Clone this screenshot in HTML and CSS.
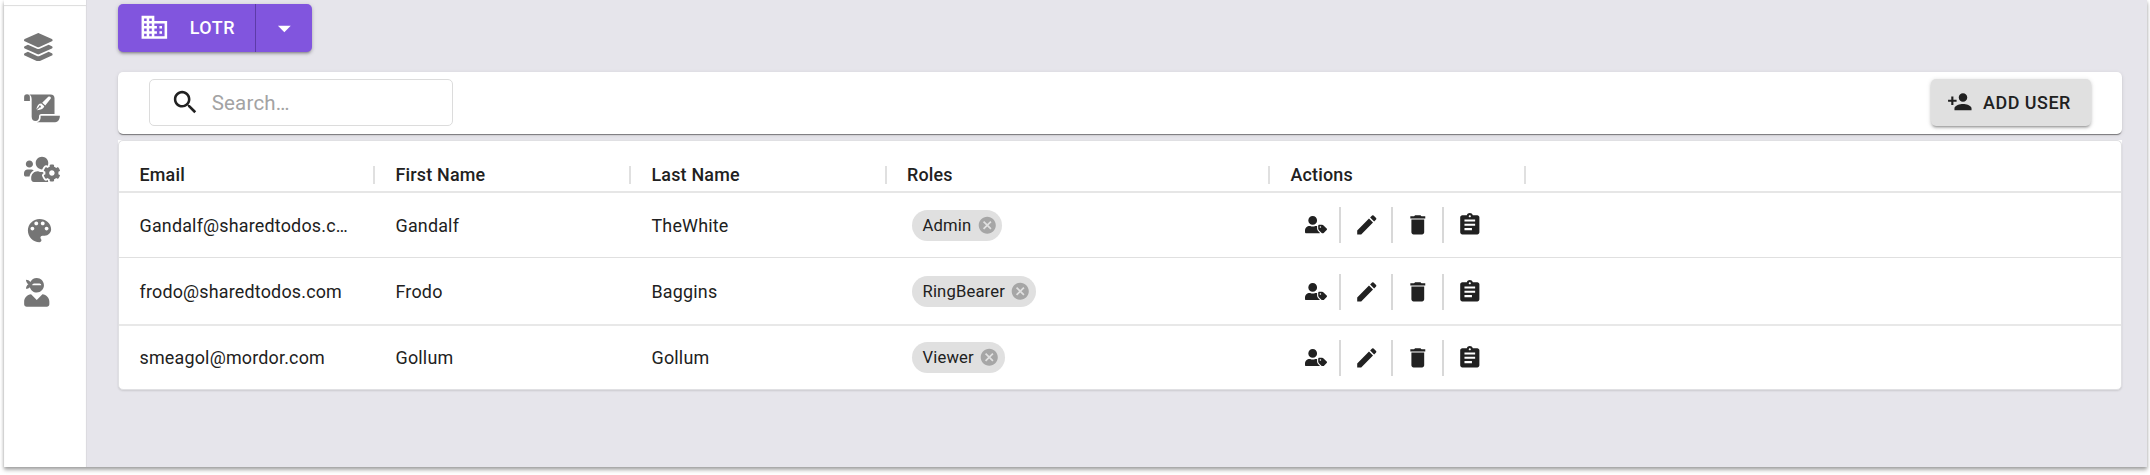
FILE: index.html
```html
<!DOCTYPE html>
<html lang="en">
<head>
<meta charset="utf-8">
<title>Users</title>
<link rel="stylesheet" href="styles.css">
</head>
<body>
<svg class="defs" width="0" height="0">
  <symbol id="i-tag" viewBox="0 0 640 512"><path d="M630.6 364.9l-90.3-90.2c-12-12-28.3-18.7-45.3-18.7h-79.3c-17.7 0-32 14.3-32 32v79.2c0 17 6.7 33.2 18.7 45.2l90.3 90.2c12.5 12.5 32.8 12.5 45.3 0l92.5-92.5c12.6-12.5 12.6-32.7.1-45.2zm-182.8-21c-13.3 0-24-10.7-24-24s10.7-24 24-24 24 10.7 24 24c0 13.2-10.7 24-24 24zm-223.8-88c70.7 0 128-57.3 128-128C352 57.3 294.7 0 224 0S96 57.3 96 128c0 70.6 57.3 127.9 128 127.9zm127.8 111.2V294c-12.2-3.6-24.9-6.2-38.2-6.2h-16.7c-22.2 10.2-46.9 16-72.9 16s-50.6-5.8-72.9-16h-16.7C60.2 287.9 0 348.1 0 422.3v41.6c0 26.5 21.5 48 48 48h352c15.5 0 29.1-7.5 37.9-18.9l-58-58c-18.1-18.1-28.1-42.2-28.1-67.9z"/></symbol>
  <symbol id="i-edit" viewBox="0 0 24 24"><path d="M3 17.25V21h3.75L17.81 9.94l-3.75-3.75L3 17.25zM20.71 7.04c.39-.39.39-1.02 0-1.41l-2.34-2.34a.9959.9959 0 0 0-1.41 0l-1.83 1.83 3.75 3.75 1.83-1.83z"/></symbol>
  <symbol id="i-delete" viewBox="0 0 24 24"><path d="M6 19c0 1.1.9 2 2 2h8c1.1 0 2-.9 2-2V7H6v12zM19 4h-3.5l-1-1h-5l-1 1H5v2h14V4z"/></symbol>
  <symbol id="i-list" viewBox="0 0 24 24"><path d="M19 3h-4.18C14.4 1.84 13.3 1 12 1c-1.3 0-2.4.84-2.82 2H5c-1.1 0-2 .9-2 2v14c0 1.1.9 2 2 2h14c1.1 0 2-.9 2-2V5c0-1.1-.9-2-2-2zm-7 0c.55 0 1 .45 1 1s-.45 1-1 1-1-.45-1-1 .45-1 1-1zm2 14H7v-2h7v2zm3-4H7v-2h10v2zm0-4H7V7h10v2z"/></symbol>
  <symbol id="i-cancel" viewBox="0 0 24 24"><path d="M12 2C6.47 2 2 6.47 2 12s4.47 10 10 10 10-4.47 10-10S17.53 2 12 2zm5 13.59L15.59 17 12 13.41 8.41 17 7 15.59 10.59 12 7 8.41 8.41 7 12 10.59 15.59 7 17 8.41 13.41 12 17 15.59z"/></symbol>
</svg>
<div class="app">
  <nav class="sidebar">
    <svg class="nav-layers" viewBox="0 0 512 512"><path d="M12.41 148.02l232.94 105.67c6.8 3.09 14.49 3.09 21.29 0l232.94-105.67c16.55-7.51 16.55-32.52 0-40.03L266.65 2.31a25.607 25.607 0 0 0-21.29 0L12.41 107.98c-16.55 7.51-16.55 32.53 0 40.04zm487.18 88.28l-58.09-26.33-161.64 73.27c-7.56 3.43-15.59 5.17-23.86 5.17s-16.29-1.74-23.86-5.17L70.51 209.97l-58.1 26.33c-16.55 7.5-16.55 32.5 0 40l232.94 105.59c6.8 3.08 14.49 3.08 21.29 0L499.59 276.3c16.55-7.5 16.55-32.5 0-40zm0 127.8l-57.87-26.23-161.86 73.37c-7.56 3.43-15.59 5.17-23.86 5.17s-16.29-1.74-23.86-5.17L70.29 337.87 12.41 364.1c-16.55 7.5-16.55 32.5 0 40l232.94 105.59c6.8 3.08 14.49 3.08 21.29 0L499.59 404.1c16.55-7.5 16.55-32.5 0-40z"/></svg>
    <svg class="nav-wide" viewBox="0 0 36 29">
      <path d="M0 7V3.2A2.9 2.9 0 0 1 5.8 3.2V7z"/>
      <path d="M5.2.4H26.6A4 4 0 0 1 30.6 4.4V20.2H17.6C15.5 20.2 15 21.5 15 23.2C15 25.5 14 27.2 11.6 27.2C9 27.2 7.6 25.4 7.6 22.8V5.2C7.6 2.8 6.8 1.4 5.2.4z"/>
      <path d="M16.6 21.8H36C36 26 33.8 28.5 29.8 28.5H12.8C15.6 27.8 16.6 25.8 16.6 23.6z"/>
      <path class="pen" d="M24.3 2.8C25.8 1.7 27.7 3.2 26.7 4.8L21.3 11.6L18.2 8.8zM17.3 9.6L20.3 12.3C19.8 14.6 17.3 15.8 12.8 16.3L15.6 13.6A1 1 0 1 0 14.9 12.9L12.3 15.7C12.9 11.6 14.7 9.6 17.3 9.6z"/>
    </svg>
    <svg class="nav-wide" viewBox="0 0 640 512"><path d="M610.5 341.3c2.6-14.1 2.6-28.5 0-42.6l25.8-14.9c3-1.7 4.3-5.2 3.3-8.5-6.7-21.6-18.2-41.2-33.2-57.4-2.3-2.5-6-3.1-9-1.4l-25.8 14.9c-10.9-9.3-23.4-16.5-36.9-21.3v-29.8c0-3.4-2.4-6.4-5.7-7.1-22.3-5-45-4.8-66.2 0-3.3.7-5.7 3.7-5.7 7.1v29.8c-13.5 4.8-26 12-36.9 21.3l-25.8-14.9c-2.9-1.7-6.7-1.1-9 1.4-15 16.2-26.5 35.8-33.2 57.4-1 3.3.4 6.8 3.3 8.5l25.8 14.9c-2.6 14.1-2.6 28.5 0 42.6l-25.8 14.9c-3 1.7-4.3 5.2-3.3 8.5 6.7 21.6 18.2 41.1 33.2 57.4 2.3 2.5 6 3.1 9 1.4l25.8-14.9c10.9 9.3 23.4 16.5 36.9 21.3v29.8c0 3.4 2.4 6.4 5.7 7.1 22.3 5 45 4.8 66.2 0 3.3-.7 5.7-3.7 5.7-7.1v-29.8c13.5-4.8 26-12 36.9-21.3l25.8 14.9c2.9 1.7 6.7 1.1 9-1.4 15-16.2 26.5-35.8 33.2-57.4 1-3.3-.4-6.8-3.3-8.5l-25.8-14.9zM496 368.5c-26.8 0-48.5-21.8-48.5-48.5s21.8-48.5 48.5-48.5 48.5 21.8 48.5 48.5-21.7 48.5-48.5 48.5zM96 224c35.3 0 64-28.7 64-64s-28.7-64-64-64-64 28.7-64 64 28.7 64 64 64zm224 32c1.9 0 3.7-.5 5.6-.6 8.3-21.7 20.5-42.1 36.3-59.2 7.4-8 17.9-12.6 28.9-12.6 6.9 0 13.7 1.8 19.6 5.3l7.9 4.6c.8-.5 1.6-.9 2.4-1.4 7-14.6 11.2-30.8 11.2-48 0-61.9-50.1-112-112-112S208 82.1 208 144c0 61.9 50.1 112 112 112zm105.2 194.5c-2.3-1.2-4.6-2.6-6.8-3.9-8.2 4.8-15.3 9.8-27.5 9.8-10.9 0-21.4-4.6-28.9-12.6-18.3-19.8-32.3-43.9-40.2-69.6-10.7-34.5 24.9-49.7 25.8-50.3-.1-2.6-.1-5.2 0-7.8l-7.9-4.6c-3.8-2.2-7-5-9.8-8.1-3.3.2-6.5.6-9.8.6-24.6 0-47.6-6-68.5-16h-8.3C179.6 288 128 339.6 128 403.2V432c0 26.5 21.5 48 48 48h255.4c-3.7-6-6.2-12.8-6.2-20.3v-9.2zM173.1 274.6C161.5 263.1 145.6 256 128 256H64c-35.3 0-64 28.7-64 64v32c0 17.7 14.3 32 32 32h65.9c6.3-47.4 34.9-87.3 75.2-109.4z"/></svg>
    <svg class="nav-palette" viewBox="0 0 24 24"><path d="M12 3c-4.97 0-9 4.03-9 9s4.03 9 9 9c.83 0 1.5-.67 1.5-1.5 0-.39-.15-.74-.39-1.01-.23-.26-.38-.61-.38-.99 0-.83.67-1.5 1.5-1.5H16c2.76 0 5-2.24 5-5 0-4.42-4.03-8-9-8zm-5.5 9c-.83 0-1.5-.67-1.5-1.5S5.67 9 6.5 9 8 9.67 8 10.5 7.33 12 6.5 12zm3-4C8.67 8 8 7.33 8 6.5S8.67 5 9.5 5s1.5.67 1.5 1.5S10.33 8 9.5 8zm5 0c-.83 0-1.5-.67-1.5-1.5S13.67 5 14.5 5s1.5.67 1.5 1.5S15.33 8 14.5 8zm3 4c-.83 0-1.5-.67-1.5-1.5S16.67 9 17.5 9s1.5.67 1.5 1.5-.67 1.5-1.5 1.5z"/></svg>
    <svg class="nav-ninja" viewBox="0 0 448 512"><path d="M325.4 289.2L224 390.6 122.6 289.2C54 295.3 0 352.2 0 422.4v44.8C0 491.9 20.1 512 44.8 512h358.4c24.7 0 44.8-20.1 44.8-44.8v-44.8c0-70.2-54-127.1-122.6-133.2zM32 192c27.3 0 51.8-11.5 69.2-29.7 15.1 53.9 64 93.7 122.8 93.7 70.7 0 128-57.3 128-128S294.7 0 224 0c-50.4 0-93.6 29.4-114.5 71.8C92.1 47.8 64 32 32 32c0 33.4 17.1 62.8 43.1 80-26 17.2-43.1 46.6-43.1 80zm144-96h96c17.7 0 32 14.3 32 32H144c0-17.7 14.3-32 32-32z"/></svg>
  </nav>
  <main class="content">
    <div class="org-button">
      <div class="org-main">
        <svg class="icon-lg" viewBox="0 0 24 24"><path d="M12 7V3H2v18h20V7H12zM6 19H4v-2h2v2zm0-4H4v-2h2v2zm0-4H4V9h2v2zm0-4H4V5h2v2zm4 12H8v-2h2v2zm0-4H8v-2h2v2zm0-4H8V9h2v2zm0-4H8V5h2v2zm10 12h-8v-2h2v-2h-2v-2h2v-2h-2V9h8v10zm-2-8h-2v2h2v-2zm0 4h-2v2h2v-2z"/></svg>
        <span>LOTR</span>
      </div>
      <div class="org-toggle"><svg class="icon-lg" viewBox="0 0 24 24"><path d="M7 10l5 5 5-5z"/></svg></div>
    </div>
    <div class="toolbar">
      <div class="search">
        <svg class="icon-lg" viewBox="0 0 24 24"><path d="M15.5 14h-.79l-.28-.27C15.41 12.59 16 11.11 16 9.5 16 5.91 13.09 3 9.5 3S3 5.91 3 9.5 5.91 16 9.5 16c1.61 0 3.09-.59 4.23-1.57l.27.28v.79l5 4.99L20.49 19l-4.99-5zm-6 0C7.01 14 5 11.99 5 9.5S7.01 5 9.5 5 14 7.01 14 9.5 11.99 14 9.5 14z"/></svg>
        <span>Search…</span>
      </div>
      <div class="add-button">
        <svg class="icon-add" viewBox="0 0 24 24"><path d="M15 12c2.21 0 4-1.79 4-4s-1.79-4-4-4-4 1.79-4 4 1.79 4 4 4zm-9-2V7H4v3H1v2h3v3h2v-3h3v-2H6zm9 4c-2.67 0-8 1.34-8 4v2h16v-2c0-2.66-5.33-4-8-4z"/></svg>
        <span>ADD USER</span>
      </div>
    </div>
    <div class="grid-frame">
    <div class="grid">
      <div class="row head">
        <div class="cell">Email</div><div class="cell">First Name</div><div class="cell">Last Name</div><div class="cell">Roles</div><div class="cell">Actions</div>
      </div>
      <div class="row">
        <div class="cell">Gandalf@sharedtodos.c…</div><div class="cell">Gandalf</div><div class="cell">TheWhite</div>
        <div class="cell"><span class="chip">Admin<svg><use href="#i-cancel"/></svg></span></div>
        <div class="actions"><i><svg class="tag"><use href="#i-tag"/></svg></i><i><svg><use href="#i-edit"/></svg></i><i><svg><use href="#i-delete"/></svg></i><i><svg><use href="#i-list"/></svg></i></div>
      </div>
      <div class="row">
        <div class="cell">frodo@sharedtodos.com</div><div class="cell">Frodo</div><div class="cell">Baggins</div>
        <div class="cell"><span class="chip">RingBearer<svg><use href="#i-cancel"/></svg></span></div>
        <div class="actions"><i><svg class="tag"><use href="#i-tag"/></svg></i><i><svg><use href="#i-edit"/></svg></i><i><svg><use href="#i-delete"/></svg></i><i><svg><use href="#i-list"/></svg></i></div>
      </div>
      <div class="row">
        <div class="cell">smeagol@mordor.com</div><div class="cell">Gollum</div><div class="cell">Gollum</div>
        <div class="cell"><span class="chip">Viewer<svg><use href="#i-cancel"/></svg></span></div>
        <div class="actions"><i><svg class="tag"><use href="#i-tag"/></svg></i><i><svg><use href="#i-edit"/></svg></i><i><svg><use href="#i-delete"/></svg></i><i><svg><use href="#i-list"/></svg></i></div>
      </div>
    </div>
    </div>
  </main>
</div>
</body>
</html>
```
FILE: styles.css
```css
* { box-sizing: border-box; }
body {
  margin: 0;
  height: 475px;
  overflow: hidden;
  background: #fff;
  color: #212121;
  font-family: Roboto, "Liberation Sans", sans-serif;
  font-size: 17.92px;
  letter-spacing: 0.19px;
}
svg { display: block; flex: none; fill: currentColor; }
.defs { position: absolute; }
.app {
  display: flex;
  width: 2143px;
  height: 467px;
  margin-left: 4px;
  box-shadow: 0 3px 4px rgba(0, 0, 0, 0.3), 0 1px 3px rgba(0, 0, 0, 0.15);
}
.sidebar {
  width: 82px;
  display: flex;
  flex-direction: column;
  padding: 27.5px 0 0 20.3px;
  background: #fff;
  border-top: 5px solid #fff;
  box-shadow: inset 0 1px 1px #dcdcdc;
  color: #757575;
}
.nav-layers { width: 28.6px; height: 28.6px; margin-bottom: 33px; }
.nav-wide { width: 36px; height: 28.8px; margin-bottom: 32.4px; }
.nav-palette { width: 31px; height: 31px; margin: -1px 0 31.6px; }
.nav-ninja { width: 25.5px; height: 28.8px; }
.pen { fill: #fff; }
.content {
  flex: 1;
  padding: 4px 25px 0 32px;
  background: #e6e5eb;
  box-shadow: inset 1px 0 0 #dcdbe0;
}
.icon-lg { width: 30.7px; height: 30.7px; }
.org-button {
  display: flex;
  width: 194px;
  height: 48px;
  border-radius: 5px;
  background: #8155de;
  color: #fff;
  font-weight: 500;
  letter-spacing: 0.51px;
  box-shadow: 0 3px 2px -2px rgba(0, 0, 0, 0.2), 0 2px 3px rgba(0, 0, 0, 0.16), 0 1px 5px rgba(0, 0, 0, 0.14);
}
.org-main {
  display: flex;
  align-items: center;
  gap: 20.5px;
  width: 138px;
  padding: 0 0 1px 20.5px;
  border-right: 1px solid #5d3ba8;
}
.org-toggle { flex: 1; display: grid; place-items: center; }
.toolbar {
  display: flex;
  align-items: center;
  justify-content: space-between;
  height: 62px;
  margin-top: 20px;
  padding: 0 31px 1px;
  border-radius: 5px;
  background: #fff;
  box-shadow: 0 2px 1px -1px rgba(0, 0, 0, 0.3), 0 1px 1px rgba(0, 0, 0, 0.2), 0 1px 4px rgba(0, 0, 0, 0.1);
}
.search {
  display: flex;
  align-items: center;
  gap: 11px;
  width: 304px;
  height: 47px;
  padding-left: 20px;
  border: 1px solid #dcdcdc;
  border-radius: 5px;
  font-size: 20.5px;
}
.search span { color: #a3a3a3; }
.add-button {
  display: flex;
  align-items: center;
  gap: 11px;
  width: 160px;
  height: 47px;
  padding: 0 0 1px 15.5px;
  border-radius: 5px;
  background: #e0e0e0;
  font-weight: 500;
  letter-spacing: 0.51px;
  box-shadow: 0 3px 2px -2px rgba(0, 0, 0, 0.2), 0 2px 3px rgba(0, 0, 0, 0.16), 0 1px 5px rgba(0, 0, 0, 0.14);
}
.icon-add { width: 25.6px; height: 25.6px; }
.grid-frame {
  height: 249px;
  margin-top: 6px;
  background: linear-gradient(#fff 6px, transparent 6px);
}
.grid {
  height: 250px;
  border: 1px solid #e0e0e3;
  border-radius: 5px;
  background: #fff;
  box-shadow: 0 1px 2px rgba(0, 0, 0, 0.12);
}
.row {
  display: grid;
  grid-template-columns: 256px 256px 255.5px 383.5px 256px;
  align-items: center;
  height: 65px;
  border-bottom: 1px solid #e0e0e0;
}
.row:nth-child(3) { height: 68px; padding-top: 1px; border-bottom: 2px solid #e8e8e8; }
.row:last-child { height: 63px; border-bottom: 0; }
.head.row {
  height: 52px;
  padding-top: 17px;
  border-bottom: 2px solid #e6e6e6;
  font-weight: 500;
}
.cell {
  min-width: 0;
  padding: 0 0 0 20.5px;
  white-space: nowrap;
}
.head .cell {
  display: flex;
  align-items: center;
  height: 18px;
  border-right: 2px solid #e0e0e0;
}
.chip {
  display: inline-flex;
  align-items: center;
  gap: 5.5px;
  height: 31px;
  margin-left: 5px;
  padding: 0 5px 0 10.5px;
  border-radius: 16px;
  background: #e0e0e0;
  font-size: 16.64px;
  letter-spacing: 0.15px;
  vertical-align: middle;
}
.chip svg { width: 20.5px; height: 20.5px; color: #a6a6a6; }
.actions { display: flex; padding-left: 20.3px; }
.actions i {
  display: grid;
  place-items: center;
  width: 51.2px;
  height: 36px;
  padding-left: 1.5px;
  border-right: 2px solid #d8d8d8;
}
.actions i:last-child { border-right: 0; padding-left: 0; }
.actions svg { width: 25.6px; height: 25.6px; }
.actions .tag { width: 22px; height: 17.6px; }
```
